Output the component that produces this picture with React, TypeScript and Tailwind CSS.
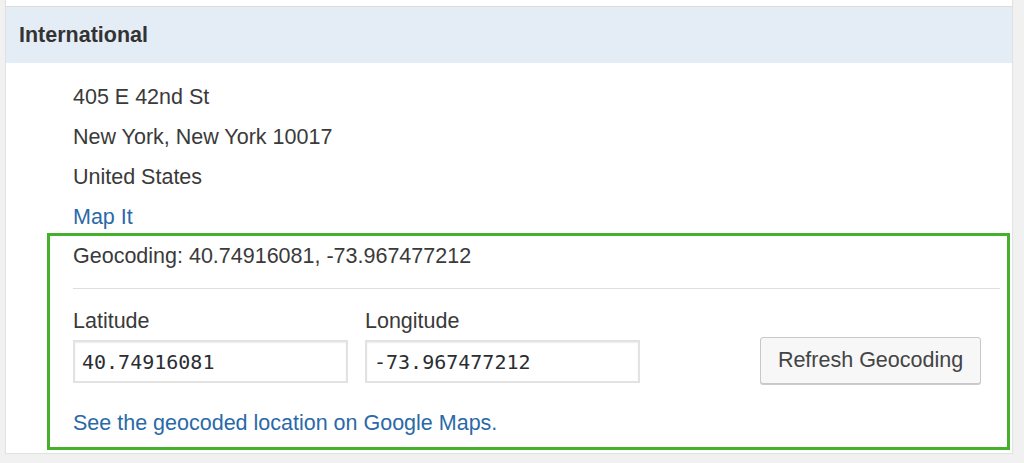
import React from 'react';

const sans = "font-['Liberation_Sans',Arial,sans-serif]";
const mono = "font-['DejaVu_Sans_Mono','Liberation_Mono',monospace]";

function CoordField({ label, value }: { label: string; value: string }) {
  return (
    <div className="flex flex-col w-[275px]">
      <label className="text-[21.5px] leading-[26px] text-[#3a3a3a]">{label}</label>
      <input
        readOnly
        value={value}
        className={`${mono} mt-[6px] h-[43px] w-full border-2 border-[#e2e2e2] bg-white px-[7px] text-[20px] text-[#2a2e32] shadow-[inset_0_1px_2px_rgba(0,0,0,0.07)] outline-none`}
      />
    </div>
  );
}

export default function App() {
  return (
    <div className={`${sans} h-[463px] w-full overflow-hidden bg-[#f1f1f1] pl-[5px] pr-[11px]`}>
      <div className="border-x border-[#e2e2e2] bg-white shadow-[0_1px_1px_rgba(0,0,0,0.06)]">
        {/* tail of previous panel */}
        <div className="h-[6px] bg-white" />

        {/* Section header */}
        <div className="flex h-[57px] items-center border-t border-[#dcdcdc] bg-[#e4edf6] pl-[13px]">
          <h3 className="text-[21.5px] font-bold text-[#333]">International</h3>
        </div>

        <div className="pb-[3px] pl-[41px] pr-[2px] pt-[21px]">
          {/* Address lines */}
          <div className="flex flex-col gap-[14px] pl-[26px] text-[21.5px] leading-[26px] text-[#3a3a3a]">
            <span>405 E 42nd St</span>
            <span>New York, New York 10017</span>
            <span>United States</span>
            <a href="#" className="text-[#2a69a8]">Map It</a>
          </div>

          {/* Geocoding box */}
          <div className="mt-[3px] border-[3px] border-[#45b02b] pb-[11px] pl-[23px] pr-[7px] pt-[7px]">
            <div className="text-[21.5px] leading-[26px] text-[#3a3a3a]">
              Geocoding: 40.74916081, -73.967477212
            </div>
            <hr className="mt-[19px] border-t border-[#dedede]" />

            <div className="mt-[19px] flex items-end">
              <div className="flex gap-[17px]">
                <CoordField label="Latitude" value="40.74916081" />
                <CoordField label="Longitude" value="-73.967477212" />
              </div>
              <button className="mb-[-1px] ml-auto mr-[19px] h-[47px] w-[221px] rounded-[3px] border border-[#c8c8c8] bg-[#f7f7f7] text-[21.5px] text-[#444] shadow-[0_1px_0_#cccccc]">
                Refresh Geocoding
              </button>
            </div>

            <a href="#" className="mt-[27px] block text-[21.5px] leading-[26px] text-[#2a69a8]">
              See the geocoded location on Google Maps.
            </a>
          </div>
        </div>
      </div>
    </div>
  );
}
